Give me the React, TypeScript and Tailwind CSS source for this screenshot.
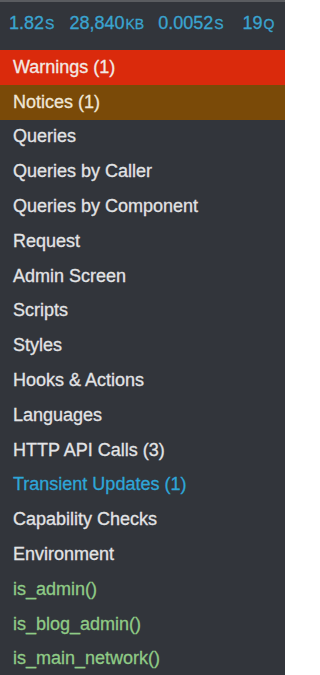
const items: { label: string; tone?: "warn" | "notice" | "blue" | "green" }[] = [
  { label: "Warnings (1)", tone: "warn" },
  { label: "Notices (1)", tone: "notice" },
  { label: "Queries" },
  { label: "Queries by Caller" },
  { label: "Queries by Component" },
  { label: "Request" },
  { label: "Admin Screen" },
  { label: "Scripts" },
  { label: "Styles" },
  { label: "Hooks & Actions" },
  { label: "Languages" },
  { label: "HTTP API Calls (3)" },
  { label: "Transient Updates (1)", tone: "blue" },
  { label: "Capability Checks" },
  { label: "Environment" },
  { label: "is_admin()", tone: "green" },
  { label: "is_blog_admin()", tone: "green" },
  { label: "is_main_network()", tone: "green" },
];

function rowClass(tone?: string) {
  if (tone === "warn") return "bg-[#da2a0c] text-[#f3e9e4]";
  if (tone === "notice") return "bg-[#7a4a08] text-[#efe6d6]";
  if (tone === "blue") return "text-[#2ea6d8]";
  if (tone === "green") return "text-[#8fcb86]";
  return "text-[#e2e3e5]";
}

function Stat({ num, unit, className }: { num: string; unit: string; className?: string }) {
  return (
    <span className={className}>
      {num}
      <span className="text-[14px] ml-[1px]">{unit}</span>
    </span>
  );
}

export default function App() {
  return (
    <div className="w-[285px] h-[675px] overflow-hidden bg-[#32353b] font-['Liberation_Sans',Arial,sans-serif] [-webkit-text-stroke:0.3px_currentColor]">
      <div className="h-[50px] border-t-2 border-[#5a5c60] flex items-center pl-[9px] pb-[6px] text-[18px] text-[#3aa4cf] whitespace-nowrap">
        <Stat num="1.82" unit="S" />
        <Stat num="28,840" unit="KB" className="ml-[15px]" />
        <Stat num="0.0052" unit="S" className="ml-[14px]" />
        <Stat num="19" unit="Q" className="ml-[19px]" />
      </div>
      <ul>
        {items.map((it) => (
          <li
            key={it.label}
            className={`h-[34.8px] flex items-center pl-[13px] text-[18px] ${rowClass(it.tone)}`}
          >
            {it.label}
          </li>
        ))}
      </ul>
    </div>
  );
}
